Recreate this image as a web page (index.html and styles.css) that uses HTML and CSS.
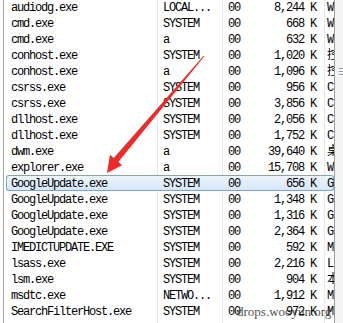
FILE: index.html
```html
<!DOCTYPE html>
<html>
<head>
<meta charset="utf-8">
<link rel="stylesheet" href="styles.css">
</head>
<body>
<div class="window">
  <div class="list">
    <div class="rows">
      <div class="row"><span class="c name">audiodg.exe</span><span class="c user">LOCAL...</span><span class="c cpu">00</span><span class="c mem">8,244 K</span><span class="c desc">Windows Audio</span></div>
      <div class="row"><span class="c name">cmd.exe</span><span class="c user">SYSTEM</span><span class="c cpu">00</span><span class="c mem">668 K</span><span class="c desc">Windows</span></div>
      <div class="row"><span class="c name">cmd.exe</span><span class="c user">a</span><span class="c cpu">00</span><span class="c mem">632 K</span><span class="c desc">Windows</span></div>
      <div class="row"><span class="c name">conhost.exe</span><span class="c user">SYSTEM</span><span class="c cpu">00</span><span class="c mem">1,020 K</span><span class="c desc">控制台窗口主机</span></div>
      <div class="row"><span class="c name">conhost.exe</span><span class="c user">a</span><span class="c cpu">00</span><span class="c mem">1,096 K</span><span class="c desc">控制台窗口主机</span></div>
      <div class="row"><span class="c name">csrss.exe</span><span class="c user">SYSTEM</span><span class="c cpu">00</span><span class="c mem">956 K</span><span class="c desc">Client Server</span></div>
      <div class="row"><span class="c name">csrss.exe</span><span class="c user">SYSTEM</span><span class="c cpu">00</span><span class="c mem">3,856 K</span><span class="c desc">Client Server</span></div>
      <div class="row"><span class="c name">dllhost.exe</span><span class="c user">SYSTEM</span><span class="c cpu">00</span><span class="c mem">2,056 K</span><span class="c desc">COM Surrogate</span></div>
      <div class="row"><span class="c name">dllhost.exe</span><span class="c user">SYSTEM</span><span class="c cpu">00</span><span class="c mem">1,752 K</span><span class="c desc">COM Surrogate</span></div>
      <div class="row"><span class="c name">dwm.exe</span><span class="c user">a</span><span class="c cpu">00</span><span class="c mem">39,640 K</span><span class="c desc">桌面窗口管理器</span></div>
      <div class="row"><span class="c name">explorer.exe</span><span class="c user">a</span><span class="c cpu">00</span><span class="c mem">15,708 K</span><span class="c desc">Windows</span></div>
      <div class="row selected"><span class="c name">GoogleUpdate.exe</span><span class="c user">SYSTEM</span><span class="c cpu">00</span><span class="c mem">656 K</span><span class="c desc">Google Installer</span></div>
      <div class="row"><span class="c name">GoogleUpdate.exe</span><span class="c user">SYSTEM</span><span class="c cpu">00</span><span class="c mem">1,348 K</span><span class="c desc">Google Installer</span></div>
      <div class="row"><span class="c name">GoogleUpdate.exe</span><span class="c user">SYSTEM</span><span class="c cpu">00</span><span class="c mem">1,316 K</span><span class="c desc">Google Installer</span></div>
      <div class="row"><span class="c name">GoogleUpdate.exe</span><span class="c user">SYSTEM</span><span class="c cpu">00</span><span class="c mem">2,364 K</span><span class="c desc">Google Installer</span></div>
      <div class="row"><span class="c name">IMEDICTUPDATE.EXE</span><span class="c user">SYSTEM</span><span class="c cpu">00</span><span class="c mem">592 K</span><span class="c desc">Microsoft</span></div>
      <div class="row"><span class="c name">lsass.exe</span><span class="c user">SYSTEM</span><span class="c cpu">00</span><span class="c mem">2,216 K</span><span class="c desc">Local Security</span></div>
      <div class="row"><span class="c name">lsm.exe</span><span class="c user">SYSTEM</span><span class="c cpu">00</span><span class="c mem">904 K</span><span class="c desc">本地会话管理器服务</span></div>
      <div class="row"><span class="c name">msdtc.exe</span><span class="c user">NETWO...</span><span class="c cpu">00</span><span class="c mem">1,912 K</span><span class="c desc">Microsoft</span></div>
      <div class="row"><span class="c name">SearchFilterHost.exe</span><span class="c user">SYSTEM</span><span class="c cpu">00</span><span class="c mem">972 K</span><span class="c desc">Microsoft</span></div>
    </div>
  </div>
  <div class="scrollbar"><div class="grip"><i></i><i></i><i></i></div></div>
  <svg class="arrow" width="343" height="323" viewBox="0 0 343 323">
    <polygon points="204.4,56.3 118.3,161.9 122.1,165.2 107,173 109.9,154.8 113.7,158.1 203.6,55.7" fill="#ec2b2b"/>
  </svg>
  <div class="watermark">drops.wooyun.org</div>
</div>
</body>
</html>
```
FILE: styles.css
```css
html, body {
  margin: 0;
  padding: 0;
  background: #ffffff;
}
body {
  width: 343px;
  height: 323px;
  overflow: hidden;
}
.window {
  position: relative;
  display: flex;
  width: 343px;
  height: 323px;
  overflow: hidden;
  background: #ffffff;
}
.list {
  margin-left: 3px;
  width: 330px;
  height: 323px;
  flex: none;
  border-left: 1px solid #a3a3a3;
  border-right: 1px solid #9d9d9d;
  overflow: hidden;
  background-image:
    linear-gradient(#dfe8f3, #dfe8f3),
    linear-gradient(#dfe8f3, #dfe8f3),
    linear-gradient(#dfe8f3, #dfe8f3);
  background-size: 1px 100%;
  background-repeat: no-repeat;
  background-position: 153px 0, 218px 0, 320px 0;
}
.rows {
  margin-top: -1px;
}
.row {
  display: grid;
  grid-template-columns: 153px 65px 30px 72px 10px;
  height: 16px;
  font-family: "Liberation Mono", "Noto Sans CJK SC", monospace;
  font-size: 12px;
  letter-spacing: -1.2px;
  line-height: 18px;
  color: #000000;
}
.c {
  white-space: nowrap;
  overflow: hidden;
  height: 16px;
}
.name { padding-left: 7px; }
.user { padding-left: 6px; }
.cpu { padding-left: 6px; }
.mem { text-align: right; padding-right: 8px; }
.desc { padding-left: 3px; letter-spacing: 0; }
.row.selected {
  margin-left: 2px;
  grid-template-columns: 151px 65px 30px 72px 10px;
  border-radius: 3px;
  background: linear-gradient(#eef5fd, #d5e6fa);
  box-shadow: inset 0 0 0 1px #7da2ce;
}
.row.selected .name { padding-left: 5px; }
.scrollbar {
  flex: 1;
  height: 323px;
  background: #f3f3f3;
  padding-top: 68px;
  box-sizing: border-box;
}
.grip {
  display: flex;
  flex-direction: column;
  gap: 1px;
  margin-left: 4px;
}
.grip i {
  display: block;
  width: 4px;
  height: 1px;
  background: #8d99a6;
  border-bottom: 1px solid #ffffff;
}
.arrow {
  position: absolute;
  left: 0;
  top: 0;
  pointer-events: none;
}
.watermark {
  position: absolute;
  left: 237px;
  top: 304px;
  font-family: "Liberation Serif", serif;
  font-size: 13px;
  color: rgba(40, 40, 40, 0.85);
  white-space: nowrap;
}
```
